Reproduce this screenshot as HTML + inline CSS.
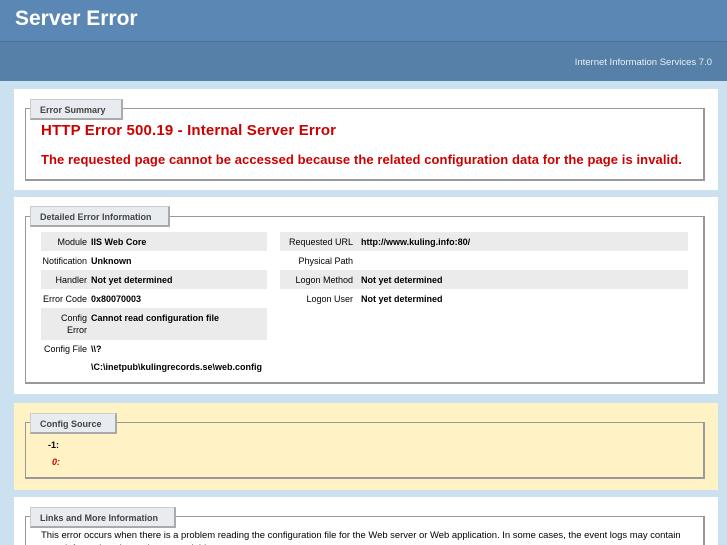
<!DOCTYPE html>
<html style="width:727px;height:545px;overflow:hidden"><head><meta charset="utf-8"><style>
*{margin:0;padding:0;box-sizing:border-box}
body{width:727px;height:545px;overflow:hidden;background:#cbe1ef;font-family:"Liberation Sans",Arial,sans-serif;position:relative}
.a{position:absolute;white-space:nowrap}
#h1{left:0;top:0;width:727px;height:41px;background:#5a87b3}
#h2{left:0;top:41px;width:727px;height:40px;background:#5680a7;border-top:1px solid #4a7099}
.panel{position:absolute;left:14px;width:704px;background:#fff;overflow:hidden}
.fs{position:absolute;left:25px;width:680px;border:1px solid #999;border-right:2px solid #999;border-bottom:2px solid #999}
.lg{position:absolute;left:30px;height:21px;background:#e8ebef;border:1px solid #ccc;border-right:2px solid #aaa;border-bottom:2px solid #aaa;font-size:9px;font-weight:bold;color:#444;padding:5px 0 0 9px}
.row{position:absolute;height:19px;font-size:9px;color:#000}
.g{background:#ebebeb}
.lb{position:absolute;text-align:right;top:5px}
.v{position:absolute;font-weight:bold;top:5px}
</style></head><body>
<div class="a" id="h1"></div>
<div class="a" id="h2"></div>
<div class="a" style="left:15px;top:7px;font-size:21px;font-weight:bold;color:#fff">Server Error</div>
<div class="a" style="right:15px;top:57px;font-size:9.5px;color:#e8eef5">Internet Information Services 7.0</div>

<div class="panel" style="top:89px;height:101px"></div>
<div class="fs" style="top:108px;height:73px"></div>
<div class="lg a" style="top:99px;width:93px">Error Summary</div>
<div class="a" style="left:41px;top:122px;font-size:15px;font-weight:bold;color:#cc0000;letter-spacing:0.15px">HTTP Error 500.19 - Internal Server Error</div>
<div class="a" style="left:41px;top:152px;font-size:13px;font-weight:bold;color:#cc0000;letter-spacing:0.08px">The requested page cannot be accessed because the related configuration data for the page is invalid.</div>

<div class="panel" style="top:197px;height:197px"></div>
<div class="fs" style="top:216px;height:168px"></div>
<div class="lg a" style="top:206px;width:140px">Detailed Error Information</div>

<div class="row g" style="left:41px;top:232px;width:226px"><span class="lb" style="right:180px">Module</span><span class="v" style="left:50px">IIS Web Core</span></div>
<div class="row" style="left:41px;top:251px;width:226px"><span class="lb" style="right:180px">Notification</span><span class="v" style="left:50px">Unknown</span></div>
<div class="row g" style="left:41px;top:270px;width:226px"><span class="lb" style="right:180px">Handler</span><span class="v" style="left:50px">Not yet determined</span></div>
<div class="row" style="left:41px;top:289px;width:226px"><span class="lb" style="right:180px">Error Code</span><span class="v" style="left:50px">0x80070003</span></div>
<div class="row g" style="left:41px;top:308px;width:226px;height:32px"><span class="lb" style="right:180px;line-height:12px;top:4px">Config<br>Error</span><span class="v" style="left:50px">Cannot read configuration file</span></div>
<div class="row" style="left:41px;top:340px;width:226px;height:30px"><span class="lb" style="right:180px;top:4px">Config File</span><span class="v" style="left:50px;line-height:18px;top:0">\\?<br>\C:\inetpub\kulingrecords.se\web.config</span></div>

<div class="row g" style="left:280px;top:232px;width:408px"><span class="lb" style="right:335px">Requested URL</span><span class="v" style="left:81px">http://www.kuling.info:80/</span></div>
<div class="row" style="left:280px;top:251px;width:408px"><span class="lb" style="right:335px">Physical Path</span></div>
<div class="row g" style="left:280px;top:270px;width:408px"><span class="lb" style="right:335px">Logon Method</span><span class="v" style="left:81px">Not yet determined</span></div>
<div class="row" style="left:280px;top:289px;width:408px"><span class="lb" style="right:335px">Logon User</span><span class="v" style="left:81px">Not yet determined</span></div>

<div class="panel" style="top:403px;height:87px;background:#fff3c5"></div>
<div class="fs" style="top:422px;height:57px"></div>
<div class="lg a" style="top:413px;width:87px">Config Source</div>
<div class="a" style="left:48px;top:440px;font-size:9px;font-weight:bold">-1:</div>
<div class="a" style="left:52px;top:457px;font-size:9px;font-weight:bold;font-style:italic;color:#cc0000">0:</div>

<div class="panel" style="top:497px;height:48px"></div>
<div class="fs" style="top:516px;height:40px;border-bottom:none"></div>
<div class="lg a" style="top:507px;width:146px">Links and More Information</div>
<div class="a" style="left:41px;top:530px;font-size:9.45px">This error occurs when there is a problem reading the configuration file for the Web server or Web application. In some cases, the event logs may contain</div>
<div class="a" style="left:41px;top:543px;font-size:9.45px">more information about what caused this error.</div>
</body></html>
